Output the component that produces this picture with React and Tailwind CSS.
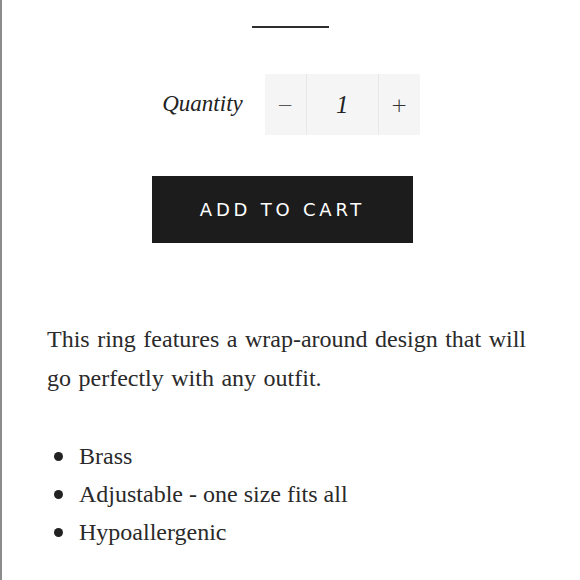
export default function App() {
  const items = ["Brass", "Adjustable - one size fits all", "Hypoallergenic"];

  return (
    <div className="w-[580px] h-[580px] bg-white border-l-2 border-[#8c8c8c] overflow-hidden font-['Liberation_Serif',serif] text-[#2a2a2a]">
      {/* Divider */}
      <div className="flex justify-center pt-[26px]">
        <div className="w-[77px] h-[2px] bg-[#2e2e2e] ml-[-1px]" />
      </div>

      {/* Quantity */}
      <div className="flex items-center justify-center mt-[46px]">
        <span className="italic text-[23px] text-[#222] mr-[22px]">Quantity</span>
        <div className="flex h-[61px] bg-[#f5f5f5]">
          <button className="w-[41px] flex items-center justify-center text-[20px] text-[#333] font-['DejaVu_Sans',sans-serif] font-light">
            −
          </button>
          <div className="w-px bg-[#e8e8e8]" />
          <div className="w-[71px] flex items-center justify-center italic text-[25px] text-[#222]">
            1
          </div>
          <div className="w-px bg-[#e8e8e8]" />
          <button className="w-[41px] flex items-center justify-center text-[20px] text-[#333] font-['DejaVu_Sans',sans-serif] font-light">
            +
          </button>
        </div>
      </div>

      {/* Add to cart */}
      <button className="ml-[150px] mt-[41px] w-[261px] h-[67px] bg-[#1c1c1c] text-white font-['DejaVu_Sans',sans-serif] text-[18px] tracking-[0.21em] flex items-center justify-center">
        ADD TO CART
      </button>

      {/* Description */}
      <div className="pl-[45px] mt-[77px]">
        <p className="text-[24px] leading-[39px] [word-spacing:1.5px] text-[#2a2a2a] w-[500px]">
          This ring features a wrap-around design that will go perfectly with any outfit.
        </p>
        <ul className="mt-[39px]">
          {items.map((item) => (
            <li key={item} className="flex items-center text-[24px] leading-[38px]">
              <span className="w-[9px] h-[9px] rounded-full bg-[#222] ml-[7px] mr-[16px]" />
              {item}
            </li>
          ))}
        </ul>
      </div>
    </div>
  );
}
